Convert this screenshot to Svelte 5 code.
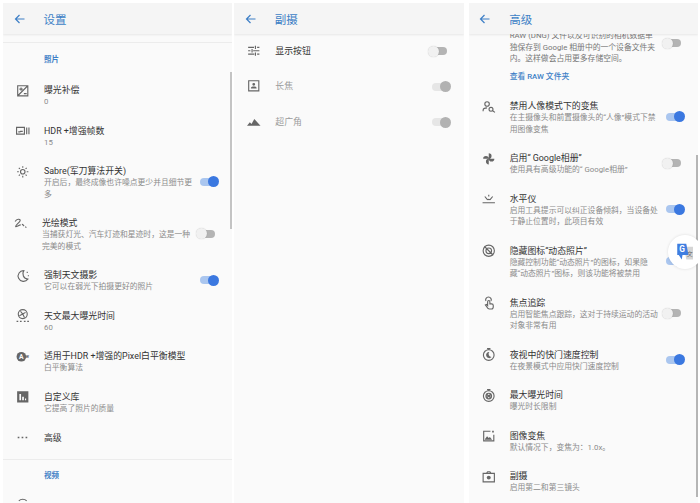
<script>
  const icons = {
    exposure: { s: "M3 3h18v18H3z M4 20L20 4 M6 9h6 M9 6v6 M14 17h5" },
    burst: { s: "M1 6h14v12H1z M19 6v12 M23 6v12 M4 14h3l1-1h4" },
    sun: { s: "M12 8a4 4 0 1 0 0 8 4 4 0 0 0 0-8z M12 2v3 M12 19v3 M2 12h3 M19 12h3 M5 5l2 2 M17 17l2 2 M5 19l2-2 M17 7l2-2" },
    paint: { s: "M2 8c3-5 9-5 9-2s-9 9-8 11c1 1 6-3 9-3 M14 13c2 0 3 2 4 3 M20 17l2 2" },
    moon: { s: "M14 3a9.5 9.5 0 1 0 7 15 9.5 9.5 0 0 1-7-15z", f: "M19 5h2v2h-2z M21 11h2v2h-2z" },
    aperture: { s: "M12 1a8 8 0 1 0 0 16 8 8 0 0 0 0-16z M8 4l4 5 M17 6l-5 3 M6 12l6-3 M15 15l-3-6", f: "M1 21h3v2H1z M7 21h3v2H7z M14 21h3v2h-3z M20 21h3v2h-3z" },
    awb: { f: "M1 12a8.5 8.5 0 1 0 17 0 8.5 8.5 0 1 0-17 0z", a: true },
    library: { f: "M2 2h20v20H2z M6 7v11h3V7z M11 12v6h3v-6z M16 15v3h2v-3z", odd: true },
    dots: { f: "M3 10h3v3H3z M10 10h3v3h-3z M17 10h3v3h-3z" },
    tune: { s: "M2 6h11 M18 6h4 M15 3v6 M2 12h4 M11 12h11 M9 9v6 M2 18h11 M18 18h4 M15 15v6" },
    portrait: { s: "M3 3h18v18H3z", f: "M12 7a2.5 2.5 0 1 0 0 5 2.5 2.5 0 0 0 0-5z M7 17h10v-1c0-2-3-2.500-5-2.500s-5 .5-5 2.500z" },
    landscape: { f: "M0 19l5-6 3 3 5-9 11 12z" },
    personSearch: { s: "M9 3a4 4 0 1 0 0 8 4 4 0 0 0 0-8z M2 20v-2c0-3 3-4 7-4 M16 13a3.500 3.500 0 1 0 0 7 3.500 3.500 0 0 0 0-7z M19 19l4 3" },
    pinwheel: { f: "M12 12H2a5 5 0 0 1 10 0z M12 12V2a5 5 0 0 1 0 10z M12 12h10a5 5 0 0 1-10 0z M12 12v10a5 5 0 0 1 0-10z" },
    level: { s: "M1 19h22 M5 8l5 6 M19 8l-5 6 M10 14a3 3 0 0 1 4 0 M12 5v3" },
    motionOff: { s: "M12 2a10 10 0 1 0 0 20 10 10 0 0 0 0-20z M4 4l16 16 M12 7a5 5 0 1 0 0 10 5 5 0 0 0 0-10z" },
    touch: { s: "M7 9a5 5 0 1 1 9 0 M10 10a2 2 0 0 1 4 0v4h3c2 0 3 1 3 3v2c0 2-1 4-3 4h-4c-2 0-3-1-4-3l-3-4 2-1 2 2z" },
    timerMoon: { s: "M9 1h6 M12 3a9.500 9.500 0 1 0 0 19 9.500 9.500 0 0 0 0-19z", f: "M13 7a5.500 5.500 0 1 0 4 9 5.500 5.500 0 0 1-4-9z" },
    timerShutter: { s: "M9 1h6 M12 3a9.500 9.500 0 1 0 0 19 9.500 9.500 0 0 0 0-19z M12 7.500a5 5 0 1 0 0 10 5 5 0 0 0 0-10z M9 9l6 7 M15 9l-6 7 M7 12.500h10" },
    imageZoom: { s: "M15 4H3v17h18V10", f: "M5 18l4-5 3 3 2-2 4 5H5z M18 3h3v3h-3z" },
    camera: { s: "M2 6h20v15H2z M8 6l2-3h4l2 3", f: "M12 10a3.500 3.500 0 1 0 0 7 3.500 3.500 0 0 0 0-7z" },
    round: { s: "M5 5a10 10 0 0 1 14 0" },
  };

  const photoRows = [
    { icon: "exposure", title: "曝光补偿", sub: "0" },
    { icon: "burst", title: "HDR +增强帧数", sub: "15" },
    { icon: "sun", title: "Sabre(军刀算法开关)", sub: "开启后，最终成像也许噪点更少并且细节更\n多", sw: "on" },
    { icon: "paint", title: "光绘模式", sub: "当捕获灯光、汽车灯迹和星迹时，这是一种\n完美的模式", sw: "off", shift: true },
    { icon: "moon", title: "强制天文摄影", sub: "它可以在弱光下拍摄更好的照片", sw: "on" },
    { icon: "aperture", title: "天文最大曝光时间", sub: "60" },
    { icon: "awb", title: "适用于HDR +增强的Pixel白平衡模型", sub: "白平衡算法" },
    { icon: "library", title: "自定义库", sub: "它提高了照片的质量" },
    { icon: "dots", title: "高级", plain: true },
  ];

  const auxRows = [
    { icon: "tune", title: "显示按钮", sw: "off" },
    { icon: "portrait", title: "长焦", sw: "dim", dim: true },
    { icon: "landscape", title: "超广角", sw: "dim", dim: true },
  ];

  const advancedRows = [
    { icon: "personSearch", title: "禁用人像模式下的变焦", sub: "在主摄像头和前置摄像头的“人像”模式下禁\n用图像变焦", sw: "on" },
    { icon: "pinwheel", title: "启用“ Google相册”", sub: "使用具有高级功能的“ Google相册”", sw: "off" },
    { icon: "level", title: "水平仪", sub: "启用工具提示可以纠正设备倾斜，当设备处\n于静止位置时，此项目有效", sw: "on" },
    { icon: "motionOff", title: "隐藏图标“动态照片”", sub: "隐藏控制功能“动态照片”的图标，如果隐\n藏“动态照片”图标，则该功能将被禁用", sw: "on" },
    { icon: "touch", title: "焦点追踪", sub: "启用智能焦点跟踪，这对于持续运动的活动\n对象非常有用", sw: "off" },
    { icon: "timerMoon", title: "夜视中的快门速度控制", sub: "在夜景模式中应用快门速度控制", sw: "on" },
    { icon: "timerShutter", title: "最大曝光时间", sub: "曝光时长限制" },
    { icon: "imageZoom", title: "图像变焦", sub: "默认情况下，变焦为：1.0x。" },
    { icon: "camera", title: "副摄", sub: "启用第二和第三镜头" },
  ];
</script>

{#snippet icon(name)}
  {@const ic = icons[name]}
  <svg class="icon" viewBox="0 0 24 24" aria-hidden="true">
    {#if ic.f}<path class="fill" fill-rule={ic.odd ? "evenodd" : "nonzero"} d={ic.f} />{/if}
    {#if ic.s}<path class="line" d={ic.s} />{/if}
    {#if ic.a}
      <text class="awb a" x="9.5" y="16">A</text>
      <text class="awb w" x="20" y="14">W</text>
    {/if}
  </svg>
{/snippet}

{#snippet toggle(state)}
  <span class="toggle {state}"><i></i></span>
{/snippet}

{#snippet header(title)}
  <header>
    <svg class="back" viewBox="0 0 24 24" aria-hidden="true"><path d="M21 12H4 M11 4l-8 8 8 8" /></svg>
    <h1>{title}</h1>
  </header>
{/snippet}

{#snippet row(r)}
  <div class="row" class:shift={r.shift} class:dim={r.dim} class:plain={r.plain}>
    <div class="ic">{@render icon(r.icon)}</div>
    <div class="text">
      <div class="title">{r.title}</div>
      {#if r.sub}<div class="sub">{r.sub}</div>{/if}
    </div>
    {#if r.sw}{@render toggle(r.sw)}{/if}
  </div>
{/snippet}

<main>
  <section class="panel">
    {@render header("设置")}
    <div class="list first">
      <div class="group">照片</div>
      {#each photoRows as r}{@render row(r)}{/each}
      <div class="group ruled">视频</div>
      {@render row({ icon: "round", title: "" })}
    </div>
    <span class="scrollbar settings"></span>
  </section>

  <section class="panel mid">
    {@render header("副摄")}
    <div class="list aux">
      {#each auxRows as r}{@render row(r)}{/each}
    </div>
  </section>

  <section class="panel">
    {@render header("高级")}
    <div class="list">
      <div class="row raw">
        <div class="ic"></div>
        <div class="text">
          <div class="sub">RAW (DNG) 文件以及可识别的相机数据单
独保存到 Google 相册中的一个设备文件夹
内。这样做会占用更多存储空间。</div>
          <div class="link">查看 RAW 文件夹</div>
        </div>
        {@render toggle("off")}
      </div>
      {#each advancedRows as r}{@render row(r)}{/each}
    </div>
    <span class="scrollbar advanced"></span>
    <div class="bubble">
      <svg viewBox="0 0 24 24" aria-hidden="true">
        <path class="doc-grey" d="M10 5h12v17H13z" />
        <text class="doc-wen" x="13.500" y="17">文</text>
        <path class="doc-blue" d="M1 1h12l3 15H8l-1 6-4-6H1z" />
        <text class="doc-g" x="7.500" y="12">G</text>
      </svg>
    </div>
  </section>
</main>

<style>
  :global(body) {
    background: #fff;
    font-family: Roboto, "Noto Sans CJK SC", sans-serif;
  }
  main {
    display: flex;
    gap: 2px;
    height: 503px;
    padding: 3px 2px 0 3px;
    box-sizing: border-box;
    overflow: hidden;
  }
  .panel {
    position: relative;
    width: 230px;
    background: #fafafa;
    overflow: hidden;
  }
  .mid { margin-right: 3px; }

  header {
    position: relative;
    z-index: 2;
    display: flex;
    align-items: center;
    height: 31px;
    background: #f5f5f5;
    box-shadow: 0 1px 2px rgba(0, 0, 0, 0.08);
  }
  .back {
    width: 12px;
    height: 12px;
    margin: 0 18px 0 10.500px;
    fill: none;
    stroke: #3d7fc6;
    stroke-width: 2.4;
  }
  h1 {
    margin: 0;
    font-size: 11.500px;
    font-weight: 400;
    color: #3d7fc6;
  }

  .list.first { padding-top: 8px; }
  .group {
    height: 33.500px;
    line-height: 33.500px;
    padding-left: 41px;
    font-size: 7.500px;
    font-weight: 700;
    color: #3d7fc6;
    border-top: 1px solid #ececec;
    box-sizing: border-box;
  }
  .group.ruled {
    margin-top: 5px;
    height: 31px;
    line-height: 31px;
  }

  .row {
    display: flex;
    align-items: center;
    padding: 8.500px 13px 8.500px 0;
  }
  .row.plain { padding: 9px 13px 9px 0; }
  .ic {
    flex: none;
    align-self: flex-start;
    width: 41px;
    padding-left: 13px;
    box-sizing: border-box;
  }
  .icon {
    display: block;
    width: 13.500px;
    height: 13.500px;
    margin-top: -0.5px;
    overflow: visible;
  }
  .line { fill: none; stroke: #666; stroke-width: 2; }
  .fill { fill: #666; }
  .awb {
    font-family: Roboto, sans-serif;
    font-weight: 700;
    text-anchor: middle;
  }
  .awb.a { font-size: 12px; fill: #fafafa; }
  .awb.w { font-size: 7px; fill: #666; }

  .text { flex: 1; min-width: 0; }
  .title {
    font-size: 8.900px;
    line-height: 12px;
    color: #333;
    white-space: nowrap;
  }
  .sub {
    font-size: 7.800px;
    line-height: 11.500px;
    color: #8b8b8b;
    white-space: pre-line;
  }
  .link {
    margin-top: 6px;
    font-size: 7.800px;
    line-height: 11.500px;
    font-weight: 500;
    color: #3d7fc6;
  }
  .shift .ic { padding-left: 11px; }
  .shift .text { margin-left: -2px; }

  .list.aux .row { padding: 10px 13px 12.500px 0; }
  .aux .toggle { margin-top: 1px; margin-bottom: 0; }
  .dim .title { color: #9c9c9c; }

  .row.raw {
    margin-top: -4px;
    padding-top: 0;
    padding-bottom: 9.500px;
    align-items: flex-start;
  }
  .raw .sub { color: #777; }
  .row.raw .toggle { margin: 7.500px 0 0; }

  .toggle {
    position: relative;
    flex: none;
    width: 23px;
    height: 11px;
    margin-bottom: 1.500px;
  }
  .toggle::before {
    content: "";
    position: absolute;
    left: 4px;
    right: 4px;
    top: 1.500px;
    height: 8px;
    border-radius: 4px;
    background: #b4b4b4;
  }
  .toggle i {
    position: absolute;
    top: 0;
    left: 0;
    width: 11px;
    height: 11px;
    border-radius: 50%;
    background: #f1f1f1;
    box-shadow: 0 0 1px rgba(0, 0, 0, 0.25);
  }
  .toggle.on::before { background: #aac6ef; }
  .toggle.on i { left: 12px; background: #3b78e0; box-shadow: none; }
  .toggle.dim::before { background: #e6e6e6; }
  .toggle.dim i { left: 12px; background: #b2b2b2; box-shadow: none; }

  .scrollbar {
    position: absolute;
    right: 0;
    width: 2px;
    z-index: 1;
    background: #c4c4c4;
  }
  .scrollbar.settings { top: 69px; height: 157px; }
  .scrollbar.advanced { top: 152px; bottom: 6px; background: #b5b5b5; }

  .bubble {
    position: absolute;
    z-index: 3;
    left: 199px;
    top: 232px;
    width: 34px;
    height: 34px;
    padding: 8px 6px 8px 7px;
    box-sizing: border-box;
    border-radius: 50%;
    background: #fff;
    box-shadow: 0 0 3px rgba(0, 0, 0, 0.12);
  }
  .bubble svg { display: block; width: 100%; height: 100%; overflow: visible; }
  .doc-grey { fill: #d5d5d5; }
  .doc-blue { fill: #3f7ee0; }
  .doc-g {
    font-family: Roboto, sans-serif;
    font-size: 11px;
    font-weight: 700;
    fill: #fff;
    text-anchor: middle;
  }
  .doc-wen {
    font-size: 8px;
    fill: #666;
  }
</style>
